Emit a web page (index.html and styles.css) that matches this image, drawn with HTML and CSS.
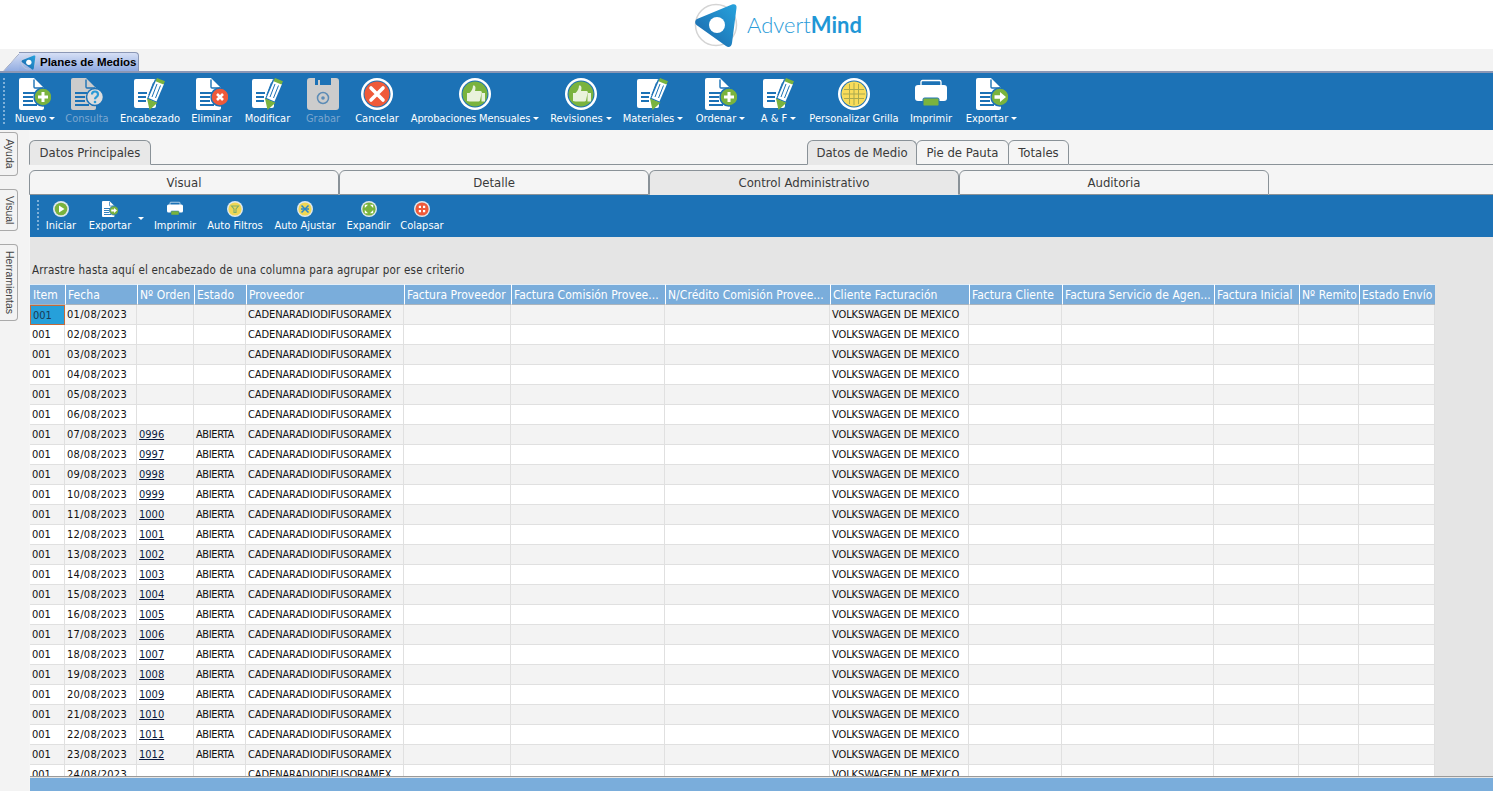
FILE: index.html
```html
<!DOCTYPE html>
<html lang="es">
<head>
<meta charset="utf-8">
<title>Planes de Medios</title>
<link rel="stylesheet" href="styles.css">
</head>
<body>
<svg class="defs" width="0" height="0" aria-hidden="true">
  <defs>
    <linearGradient id="lg" x1="1" y1="0" x2="0" y2="1"><stop offset="0" stop-color="#27a3dd"/><stop offset="1" stop-color="#1a64a8"/></linearGradient>
    <symbol id="page" viewBox="0 0 32 32">
      <path d="M2 0H15L25 10V30a2 2 0 0 1-2 2H2a2 2 0 0 1-2-2V2a2 2 0 0 1 2-2Z" fill="currentColor"/>
      <path d="M15 1.5V9a1 1 0 0 0 1 1H24" fill="none" stroke="#1c72b6" stroke-width="1.4"/>
      <path d="M4 15H16M4 19H14M4 23H14M4 27H18" stroke="#1c72b6" stroke-width="1.8"/>
    </symbol>
    <symbol id="i-new" viewBox="0 0 32 32">
      <use href="#page"/><circle cx="24" cy="19" r="9" fill="#7ab33e" stroke="#1c72b6" stroke-width="1.5"/>
      <path d="M24 14V24M19 19H29" stroke="#fff" stroke-width="3"/>
    </symbol>
    <symbol id="i-ask" viewBox="0 0 32 32">
      <use href="#page"/><circle cx="24" cy="19" r="8.5" fill="#ddd" stroke="#1c72b6" stroke-width="1.5"/>
      <path d="M21 16.5c0-4 6-4 6 0 0 2.4-3 2.2-3 4.8" fill="none" stroke="#2a9ad6" stroke-width="2.2"/><circle cx="24" cy="24" r="1.3" fill="#2a9ad6"/>
    </symbol>
    <symbol id="i-del" viewBox="0 0 32 32">
      <use href="#page"/><circle cx="24" cy="19" r="9" fill="#ef5a3a" stroke="#1c72b6" stroke-width="1.5"/>
      <path d="M21 16L27 22M27 16L21 22" stroke="#fff" stroke-width="2.6"/>
    </symbol>
    <symbol id="i-exp" viewBox="0 0 32 32">
      <use href="#page"/><circle cx="24" cy="19" r="9" fill="#7ab33e" stroke="#1c72b6" stroke-width="1.5"/>
      <path d="M18.5 17.2H24V14L30 19L24 24V20.8H18.5Z" fill="#fff"/>
    </symbol>
    <symbol id="i-edit" viewBox="0 0 32 32">
      <path d="M2 1H22V28a2 2 0 0 1-2 2H2a2 2 0 0 1-2-2V3a2 2 0 0 1 2-2Z" fill="#fff"/>
      <path d="M4 15H13M4 19H12M4 23H12" stroke="#1c72b6" stroke-width="1.8"/>
      <path d="M21 1L31 5L23 25L13 21Z" fill="#1c72b6"/>
      <path d="M22 2.5L30 6L22.5 23.5L14.5 20Z" fill="#fff"/>
      <path d="M19.5 4.5L14.8 17M23 6L18 19M26.5 7.5L21.5 20" stroke="#1c72b6" stroke-width="1"/>
      <path d="M23 0L31 3.2L29.5 6.5L21.5 3.3Z" fill="#7ab33e"/>
      <path d="M13 20.5L23.5 24.8L15.5 32Z" fill="#7ab33e"/>
    </symbol>
    <symbol id="i-save" viewBox="0 0 32 32">
      <path d="M3 0H8V7H11V2H13V7H24V0H29a3 3 0 0 1 3 3V29a3 3 0 0 1-3 3H3a3 3 0 0 1-3-3V3a3 3 0 0 1 3-3Z" fill="#ccc"/>
      <circle cx="16" cy="20" r="5.5" fill="none" stroke="#5d8cb6" stroke-width="1.5"/><circle cx="16" cy="20" r="1.8" fill="#5d8cb6"/>
    </symbol>
    <symbol id="i-cancel" viewBox="0 0 32 32">
      <circle cx="16" cy="16" r="16" fill="#fff"/><circle cx="16" cy="16" r="13.5" fill="#1c72b6"/><circle cx="16" cy="16" r="12.5" fill="#ef5a3a"/>
      <path d="M10 10L22 22M22 10L10 22" stroke="#fff" stroke-width="3.6" stroke-linecap="round"/>
    </symbol>
    <symbol id="i-thumb" viewBox="0 0 32 32">
      <circle cx="16" cy="16" r="16" fill="#fff"/><circle cx="16" cy="16" r="13.5" fill="#1c72b6"/><circle cx="16" cy="16" r="12.5" fill="#7ab33e"/>
      <path d="M8 15H10.5C12.5 13 14 10.5 14 7.5C16.5 7 17 9.5 16 13H21.5a1.5 1.5 0 0 1 1 2.5L21 22.5a1.5 1.5 0 0 1-1.5 1H10.5L8 23Z" fill="#e9f2dc"/>
      <rect x="22.5" y="15" width="3.5" height="8.5" fill="#e9f2dc"/>
    </symbol>
    <symbol id="i-grid" viewBox="0 0 32 32">
      <circle cx="16" cy="16" r="16" fill="#fff"/><circle cx="16" cy="16" r="13.5" fill="#1c72b6"/><circle cx="16" cy="16" r="12.5" fill="#f8dc5a"/>
      <path d="M11.5 6V26M16 5V27M20.5 6V26M6 11.5H26M5 16H27M6 20.5H26" stroke="#a9a94e" stroke-width="1"/>
    </symbol>
    <symbol id="i-print" viewBox="0 0 32 32">
      <path d="M6 8V4a1.5 1.5 0 0 1 1.5-1.5H24.5A1.5 1.5 0 0 1 26 4V8" fill="none" stroke="#fff" stroke-width="1.3"/>
      <path d="M3 7H29a3 3 0 0 1 3 3V20a3 3 0 0 1-3 3H3a3 3 0 0 1-3-3V10a3 3 0 0 1 3-3Z" fill="#fff"/>
      <rect x="8" y="20" width="16" height="8" rx="1.5" fill="#7ab33e" stroke="#1c72b6"/>
    </symbol>
    <symbol id="s-play" viewBox="0 0 16 16">
      <circle cx="8" cy="8" r="8" fill="#dfe9ee"/><circle cx="8" cy="8" r="6.3" fill="#7ab33e"/><path d="M6 4.5L11.5 8L6 11.5Z" fill="#fff"/>
    </symbol>
    <symbol id="s-filter" viewBox="0 0 16 16">
      <circle cx="8" cy="8" r="8" fill="#dfe9ee"/><circle cx="8" cy="8" r="6.6" fill="#f0d755"/><path d="M4.5 5H11.5L9 8V11.5H7V8Z" fill="none" stroke="#7fae6a" stroke-width="1.1"/>
    </symbol>
    <symbol id="s-fit" viewBox="0 0 16 16">
      <circle cx="8" cy="8" r="8" fill="#dfe9ee"/><circle cx="8" cy="8" r="6.6" fill="#f0d755"/><path d="M4.5 4.5L11.5 11.5M11.5 4.5L4.5 11.5M4 8H6.5M9.5 8H12" stroke="#2a85c8" stroke-width="1.5"/>
    </symbol>
    <symbol id="s-expand" viewBox="0 0 16 16">
      <circle cx="8" cy="8" r="8" fill="#dfe9ee"/><circle cx="8" cy="8" r="6.6" fill="#7ab33e"/><path d="M3.8 3.8H7L3.8 7ZM12.2 3.8V7L9 3.8ZM3.8 12.2V9L7 12.2ZM12.2 12.2H9L12.2 9Z" fill="#fff"/>
    </symbol>
    <symbol id="s-collapse" viewBox="0 0 16 16">
      <circle cx="8" cy="8" r="8" fill="#dfe9ee"/><circle cx="8" cy="8" r="6.6" fill="#ef5a3a"/><path d="M4.8 4.8H7V7H4.8ZM9 4.8H11.2V7H9ZM4.8 9H7V11.2H4.8ZM9 9H11.2V11.2H9Z" fill="#fff"/>
    </symbol>
    <symbol id="logo" viewBox="0 0 44 45">
      <circle cx="22" cy="22" r="20.5" fill="none" stroke="#d4d4d4" stroke-width="1.5"/>
      <path d="M3 16L38 1.5C41 .5 43 2 42.5 5L38 40C37.5 44 34.5 45 32 43L2.5 22C.5 20.5 1 17 3 16Z" fill="url(#lg)"/>
      <circle cx="23" cy="22" r="8" fill="#fff"/>
    </symbol>
  </defs>
</svg>

<header class="brand">
  <svg class="brand-mark"><use href="#logo"/></svg>
  <span class="brand-name">Advert<b>Mind</b></span>
</header>

<div class="doc-strip">
  <div class="doc-tab"><svg class="doc-tab-icon"><use href="#logo"/></svg><span>Planes de Medios</span></div>
</div>

<nav class="toolbar main-bar">
  <span class="grip"></span>
  <div class="tool"><svg class="ic white"><use href="#i-new"/></svg><span class="caret-label">Nuevo</span></div>
  <div class="tool off"><svg class="ic gray"><use href="#i-ask"/></svg><span>Consulta</span></div>
  <div class="tool"><svg class="ic"><use href="#i-edit"/></svg><span>Encabezado</span></div>
  <div class="tool"><svg class="ic white"><use href="#i-del"/></svg><span>Eliminar</span></div>
  <div class="tool"><svg class="ic"><use href="#i-edit"/></svg><span>Modificar</span></div>
  <div class="tool off"><svg class="ic"><use href="#i-save"/></svg><span>Grabar</span></div>
  <div class="tool"><svg class="ic"><use href="#i-cancel"/></svg><span>Cancelar</span></div>
  <div class="tool"><svg class="ic"><use href="#i-thumb"/></svg><span class="caret-label tight">Aprobaciones Mensuales</span></div>
  <div class="tool"><svg class="ic"><use href="#i-thumb"/></svg><span class="caret-label">Revisiones</span></div>
  <div class="tool"><svg class="ic"><use href="#i-edit"/></svg><span class="caret-label">Materiales</span></div>
  <div class="tool"><svg class="ic white"><use href="#i-new"/></svg><span class="caret-label">Ordenar</span></div>
  <div class="tool"><svg class="ic"><use href="#i-edit"/></svg><span class="caret-label">A &amp; F</span></div>
  <div class="tool"><svg class="ic"><use href="#i-grid"/></svg><span>Personalizar Grilla</span></div>
  <div class="tool"><svg class="ic"><use href="#i-print"/></svg><span>Imprimir</span></div>
  <div class="tool"><svg class="ic white"><use href="#i-exp"/></svg><span class="caret-label">Exportar</span></div>
</nav>

<div class="workspace">
  <aside class="side-tabs">
    <div class="side-tab">Ayuda</div>
    <div class="side-tab">Visual</div>
    <div class="side-tab">Herramientas</div>
  </aside>
  <main class="content">
    <div class="tabs-top">
      <div class="tab active wide-left">Datos Principales</div>
      <div class="tab-fill gap-fill"></div>
      <div class="tab active t-medio">Datos de Medio</div>
      <div class="tab t-pie">Pie de Pauta</div>
      <div class="tab t-tot">Totales</div>
      <div class="tab-fill end"></div>
    </div>
    <div class="tabs-second">
      <div class="tab2">Visual</div>
      <div class="tab2">Detalle</div>
      <div class="tab2 active">Control Administrativo</div>
      <div class="tab2">Auditoria</div>
      <div class="tab-fill end"></div>
    </div>
    <div class="toolbar sub-bar">
      <span class="grip"></span>
      <div class="tool"><svg class="sic"><use href="#s-play"/></svg><span>Iniciar</span></div>
      <div class="tool export-tool"><svg class="sic white"><use href="#i-exp"/></svg><span>Exportar</span><i class="sub-caret"></i></div>
      <div class="tool"><svg class="sic"><use href="#i-print"/></svg><span>Imprimir</span></div>
      <div class="tool"><svg class="sic"><use href="#s-filter"/></svg><span>Auto Filtros</span></div>
      <div class="tool"><svg class="sic"><use href="#s-fit"/></svg><span>Auto Ajustar</span></div>
      <div class="tool"><svg class="sic"><use href="#s-expand"/></svg><span>Expandir</span></div>
      <div class="tool"><svg class="sic"><use href="#s-collapse"/></svg><span>Colapsar</span></div>
    </div>
    <section class="grid-panel">
      <p class="group-hint">Arrastre hasta aquí el encabezado de una columna para agrupar por ese criterio</p>
      <div class="grid-clip">
        <table class="grid">
          <colgroup>
            <col class="c35"><col class="c72"><col class="c57"><col class="c52"><col class="c158"><col class="c107"><col class="c154"><col class="c165"><col class="c139"><col class="c93"><col class="c152"><col class="c85"><col class="c60"><col class="c76">
          </colgroup>
          <thead>
            <tr><th>Item</th><th>Fecha</th><th>Nº Orden</th><th>Estado</th><th>Proveedor</th><th>Factura Proveedor</th><th>Factura Comisión Provee...</th><th>N/Crédito Comisión Provee...</th><th>Cliente Facturación</th><th>Factura Cliente</th><th>Factura Servicio de Agen...</th><th>Factura Inicial</th><th>Nº Remito</th><th>Estado Envío</th></tr>
          </thead>
          <tbody>
            <tr><td class="sel">001</td><td>01/08/2023</td><td></td><td></td><td>CADENARADIODIFUSORAMEX</td><td></td><td></td><td></td><td>VOLKSWAGEN DE MEXICO</td><td></td><td></td><td></td><td></td><td></td></tr>
            <tr><td>001</td><td>02/08/2023</td><td></td><td></td><td>CADENARADIODIFUSORAMEX</td><td></td><td></td><td></td><td>VOLKSWAGEN DE MEXICO</td><td></td><td></td><td></td><td></td><td></td></tr>
            <tr><td>001</td><td>03/08/2023</td><td></td><td></td><td>CADENARADIODIFUSORAMEX</td><td></td><td></td><td></td><td>VOLKSWAGEN DE MEXICO</td><td></td><td></td><td></td><td></td><td></td></tr>
            <tr><td>001</td><td>04/08/2023</td><td></td><td></td><td>CADENARADIODIFUSORAMEX</td><td></td><td></td><td></td><td>VOLKSWAGEN DE MEXICO</td><td></td><td></td><td></td><td></td><td></td></tr>
            <tr><td>001</td><td>05/08/2023</td><td></td><td></td><td>CADENARADIODIFUSORAMEX</td><td></td><td></td><td></td><td>VOLKSWAGEN DE MEXICO</td><td></td><td></td><td></td><td></td><td></td></tr>
            <tr><td>001</td><td>06/08/2023</td><td></td><td></td><td>CADENARADIODIFUSORAMEX</td><td></td><td></td><td></td><td>VOLKSWAGEN DE MEXICO</td><td></td><td></td><td></td><td></td><td></td></tr>
            <tr><td>001</td><td>07/08/2023</td><td><a>0996</a></td><td>ABIERTA</td><td>CADENARADIODIFUSORAMEX</td><td></td><td></td><td></td><td>VOLKSWAGEN DE MEXICO</td><td></td><td></td><td></td><td></td><td></td></tr>
            <tr><td>001</td><td>08/08/2023</td><td><a>0997</a></td><td>ABIERTA</td><td>CADENARADIODIFUSORAMEX</td><td></td><td></td><td></td><td>VOLKSWAGEN DE MEXICO</td><td></td><td></td><td></td><td></td><td></td></tr>
            <tr><td>001</td><td>09/08/2023</td><td><a>0998</a></td><td>ABIERTA</td><td>CADENARADIODIFUSORAMEX</td><td></td><td></td><td></td><td>VOLKSWAGEN DE MEXICO</td><td></td><td></td><td></td><td></td><td></td></tr>
            <tr><td>001</td><td>10/08/2023</td><td><a>0999</a></td><td>ABIERTA</td><td>CADENARADIODIFUSORAMEX</td><td></td><td></td><td></td><td>VOLKSWAGEN DE MEXICO</td><td></td><td></td><td></td><td></td><td></td></tr>
            <tr><td>001</td><td>11/08/2023</td><td><a>1000</a></td><td>ABIERTA</td><td>CADENARADIODIFUSORAMEX</td><td></td><td></td><td></td><td>VOLKSWAGEN DE MEXICO</td><td></td><td></td><td></td><td></td><td></td></tr>
            <tr><td>001</td><td>12/08/2023</td><td><a>1001</a></td><td>ABIERTA</td><td>CADENARADIODIFUSORAMEX</td><td></td><td></td><td></td><td>VOLKSWAGEN DE MEXICO</td><td></td><td></td><td></td><td></td><td></td></tr>
            <tr><td>001</td><td>13/08/2023</td><td><a>1002</a></td><td>ABIERTA</td><td>CADENARADIODIFUSORAMEX</td><td></td><td></td><td></td><td>VOLKSWAGEN DE MEXICO</td><td></td><td></td><td></td><td></td><td></td></tr>
            <tr><td>001</td><td>14/08/2023</td><td><a>1003</a></td><td>ABIERTA</td><td>CADENARADIODIFUSORAMEX</td><td></td><td></td><td></td><td>VOLKSWAGEN DE MEXICO</td><td></td><td></td><td></td><td></td><td></td></tr>
            <tr><td>001</td><td>15/08/2023</td><td><a>1004</a></td><td>ABIERTA</td><td>CADENARADIODIFUSORAMEX</td><td></td><td></td><td></td><td>VOLKSWAGEN DE MEXICO</td><td></td><td></td><td></td><td></td><td></td></tr>
            <tr><td>001</td><td>16/08/2023</td><td><a>1005</a></td><td>ABIERTA</td><td>CADENARADIODIFUSORAMEX</td><td></td><td></td><td></td><td>VOLKSWAGEN DE MEXICO</td><td></td><td></td><td></td><td></td><td></td></tr>
            <tr><td>001</td><td>17/08/2023</td><td><a>1006</a></td><td>ABIERTA</td><td>CADENARADIODIFUSORAMEX</td><td></td><td></td><td></td><td>VOLKSWAGEN DE MEXICO</td><td></td><td></td><td></td><td></td><td></td></tr>
            <tr><td>001</td><td>18/08/2023</td><td><a>1007</a></td><td>ABIERTA</td><td>CADENARADIODIFUSORAMEX</td><td></td><td></td><td></td><td>VOLKSWAGEN DE MEXICO</td><td></td><td></td><td></td><td></td><td></td></tr>
            <tr><td>001</td><td>19/08/2023</td><td><a>1008</a></td><td>ABIERTA</td><td>CADENARADIODIFUSORAMEX</td><td></td><td></td><td></td><td>VOLKSWAGEN DE MEXICO</td><td></td><td></td><td></td><td></td><td></td></tr>
            <tr><td>001</td><td>20/08/2023</td><td><a>1009</a></td><td>ABIERTA</td><td>CADENARADIODIFUSORAMEX</td><td></td><td></td><td></td><td>VOLKSWAGEN DE MEXICO</td><td></td><td></td><td></td><td></td><td></td></tr>
            <tr><td>001</td><td>21/08/2023</td><td><a>1010</a></td><td>ABIERTA</td><td>CADENARADIODIFUSORAMEX</td><td></td><td></td><td></td><td>VOLKSWAGEN DE MEXICO</td><td></td><td></td><td></td><td></td><td></td></tr>
            <tr><td>001</td><td>22/08/2023</td><td><a>1011</a></td><td>ABIERTA</td><td>CADENARADIODIFUSORAMEX</td><td></td><td></td><td></td><td>VOLKSWAGEN DE MEXICO</td><td></td><td></td><td></td><td></td><td></td></tr>
            <tr><td>001</td><td>23/08/2023</td><td><a>1012</a></td><td>ABIERTA</td><td>CADENARADIODIFUSORAMEX</td><td></td><td></td><td></td><td>VOLKSWAGEN DE MEXICO</td><td></td><td></td><td></td><td></td><td></td></tr>
            <tr><td>001</td><td>24/08/2023</td><td></td><td></td><td>CADENARADIODIFUSORAMEX</td><td></td><td></td><td></td><td>VOLKSWAGEN DE MEXICO</td><td></td><td></td><td></td><td></td><td></td></tr>
          </tbody>
        </table>
      </div>
      <div class="bottom-bar"></div>
    </section>
  </main>
</div>
</body>
</html>
```

FILE: styles.css
```css
* { box-sizing: border-box; }
html, body { margin: 0; height: 791px; overflow: hidden; }
body {
  display: flex;
  flex-direction: column;
  background: #f3f3f3;
  font-family: "DejaVu Sans Condensed", "DejaVu Sans", sans-serif;
  font-size: 11px;
  color: #333;
}
.defs { position: absolute; }

.brand {
  height: 49px;
  flex: none;
  background: #fff;
  display: flex;
  justify-content: center;
  align-items: flex-start;
  padding: 3px 0 0 63px;
}
.brand-mark { width: 44px; height: 45px; }
.brand-name {
  font-family: Lato, sans-serif;
  font-weight: 300;
  font-size: 22px;
  line-height: 44px;
  color: #2a9bd8;
  margin-left: 9px;
}
.brand-name b { font-weight: 700; color: #1f97d6; }

.doc-strip { height: 22px; flex: none; padding: 3px 0 0 19px; }
.doc-tab {
  position: relative;
  width: 120px;
  height: 19px;
  display: flex;
  align-items: center;
  gap: 4px;
  padding-left: 2px;
  font-family: "Liberation Sans", sans-serif;
  font-weight: 700;
  font-size: 11.5px;
  color: #000;
  background: linear-gradient(#d6dff5, #8faae0);
  border: 1px solid #8b97b5;
  border-left: 0;
  border-bottom: 0;
  border-radius: 0 4px 0 0;
}
.doc-tab::before {
  content: "";
  position: absolute;
  z-index: -1;
  left: -8px;
  top: -1px;
  width: 30px;
  height: 19px;
  background: linear-gradient(#d6dff5, #8faae0);
  border-left: 1px solid #8b97b5;
  border-top: 1px solid #8b97b5;
  border-radius: 3px 0 0 0;
  transform: skewX(-42deg);
}
.doc-tab-icon { width: 15px; height: 15px; flex: none; }

.toolbar { display: grid; background: #1c72b6; color: #fff; position: relative; flex: none; }
.main-bar {
  height: 59px;
  border-top: 2px solid #8b97b5;
  padding: 5px 0 0 10px;
  grid-template-columns: 50px 54px 72px 51px 61px 50px 58px 138px 74px 70px 65px 51px 100px 54px 67px;
  justify-content: start;
}
.tool {
  display: flex;
  flex-direction: column;
  align-items: center;
  white-space: nowrap;
  line-height: 14px;
}
.main-bar .tool { gap: 2px; }
.tool.off { color: #7ba6cf; }
.tight { letter-spacing: -.15px; }
.ic { width: 32px; height: 32px; display: block; }
.white { color: #fff; }
.gray { color: #ccc; }
.caret-label::after {
  content: "";
  display: inline-block;
  margin-left: 3px;
  vertical-align: 2px;
  border: 3px solid transparent;
  border-top-color: #fff;
  border-bottom: 0;
  width: 0;
  height: 0;
}
.grip {
  position: absolute;
  left: 3px;
  top: 5px;
  bottom: 5px;
  width: 2px;
  background: repeating-linear-gradient(#7fb0d8 0 2px, transparent 2px 4px);
}

.workspace { flex: 1; display: flex; min-height: 0; }
.side-tabs { width: 29px; flex: none; padding-top: 2px; display: flex; flex-direction: column; align-items: flex-start; gap: 13px; }
.side-tab {
  writing-mode: vertical-rl;
  width: 18px;
  padding: 6px 0;
  line-height: 15px;
  font-family: "Liberation Sans", sans-serif;
  font-size: 10.5px;
  text-align: center;
  background: #f3f3f3;
  border: 1px solid #aaa;
  border-left: 0;
  border-radius: 0 4px 4px 0;
  color: #444;
}
.content { flex: 1; min-width: 0; display: flex; flex-direction: column; background: #f5f5f5; }
.tabs-top { height: 35px; flex: none; padding-top: 10px; display: flex; align-items: stretch; }
.tab {
  height: 25px;
  line-height: 24px;
  text-align: center;
  font-size: 13px;
  color: #3a3a3a;
  border: 1px solid #8a9298;
  border-radius: 6px 6px 0 0;
  background: #f5f5f5;
}
.tab.active { background: #e8e8e8; border-bottom-color: #e8e8e8; }
.wide-left { width: 122px; }
.t-medio { width: 110px; }
.t-pie { width: 93px; margin-left: -1px; }
.t-tot { width: 61px; margin-left: -1px; }
.tab-fill { flex: 1; border-bottom: 1px solid #8a9298; }
.gap-fill { flex: none; width: 656px; }
.tabs-second { height: 25px; flex: none; display: flex; margin-top: 5px; }
.tab2 {
  width: 310px;
  height: 25px;
  line-height: 24px;
  text-align: center;
  font-size: 13px;
  color: #3a3a3a;
  border: 1px solid #8a9298;
  border-radius: 6px 6px 0 0;
}
.tab2.active { background: #e8e8e8; border-bottom-color: #e8e8e8; }

.sub-bar {
  height: 42px;
  margin-left: 1px;
  padding: 6px 0 0 10px;
  grid-template-columns: 42px 67px 52px 68px 72px 55px 52px;
  justify-content: start;
}
.sub-bar .grip { left: 7px; top: 5px; bottom: 5px; }
.sub-bar .tool { gap: 2px; }
.sic { width: 16px; height: 16px; display: block; }
.export-tool { position: relative; padding-right: 11px; }
.sub-caret {
  position: absolute;
  left: 56px;
  top: 16px;
  border: 3px solid transparent;
  border-top-color: #fff;
  border-bottom: 0;
}

.grid-panel { flex: 1; min-height: 0; margin-left: 1px; background: #e5e5e5; display: flex; flex-direction: column; }
.group-hint { margin: 26px 0 0 2px; height: 21px; line-height: 14px; flex: none; color: #333; font-size: 11.5px; letter-spacing: .2px; }
.grid-clip { flex: 1; min-height: 0; overflow: hidden; border-bottom: 1px solid #9a9a9a; }
.grid { border-collapse: separate; border-spacing: 0; table-layout: fixed; width: 1405px; }
.c35 { width: 35px; } .c72 { width: 72px; } .c57 { width: 57px; } .c52 { width: 52px; }
.c158 { width: 158px; } .c107 { width: 107px; } .c154 { width: 154px; } .c165 { width: 165px; }
.c139 { width: 139px; } .c93 { width: 93px; } .c152 { width: 152px; } .c85 { width: 85px; }
.c60 { width: 60px; } .c76 { width: 76px; }
.grid th {
  height: 21px;
  padding: 0 0 0 2px;
  text-align: left;
  font-weight: 400;
  font-size: 12px;
  letter-spacing: .05px;
  color: #fff;
  background: #7aaddb;
  border-left: 1px solid #fff;
  border-bottom: 1px solid #aab4bd;
  border-top: 1px solid #e4eef7;
  white-space: nowrap;
  overflow: hidden;
}
.grid th:first-child { border-left: 0; padding-left: 3px; }
.grid td {
  height: 20px;
  padding: 0 0 0 2px;
  border-right: 1px solid #e0e0e0;
  border-bottom: 1px solid #e0e0e0;
  background: #fff;
  color: #111;
  white-space: nowrap;
  overflow: hidden;
}
.grid tbody tr:nth-child(odd) td { background: #f3f3f3; }
.grid td:nth-child(2) { letter-spacing: .3px; }
.grid td:nth-child(4) { letter-spacing: -.4px; }
.grid td:nth-child(5) { letter-spacing: -.1px; }
.grid td:nth-child(9) { letter-spacing: -.1px; }
.grid tbody tr:first-child td.sel { background: #26a0da; border: 1px solid #c46a3a; color: #1a3a55; }
.grid a { color: #0a1a40; text-decoration: underline; }
.bottom-bar { height: 13px; flex: none; margin-top: 1px; background: #7aaddb; }
```
